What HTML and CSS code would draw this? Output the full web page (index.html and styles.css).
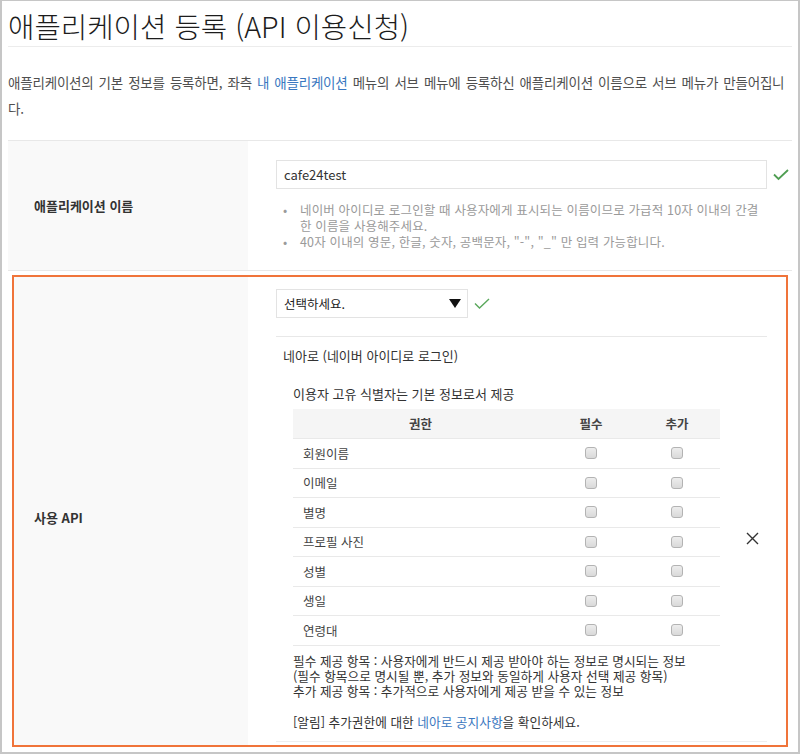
FILE: index.html
```html
<!DOCTYPE html>
<html lang="ko">
<head>
<meta charset="utf-8">
<title>애플리케이션 등록</title>
<link rel="stylesheet" href="styles.css">
</head>
<body>
<div class="frame">
  <h2 class="title">애플리케이션 등록 (API 이용신청)</h2>
  <p class="desc">애플리케이션의 기본 정보를 등록하면, 좌측 <a class="link" href="#">내 애플리케이션</a> 메뉴의 서브 메뉴에 등록하신 애플리케이션 이름으로 서브 메뉴가 만들어집니다.</p>

  <div class="row row-name">
    <div class="label">애플리케이션 이름</div>
    <div class="field">
      <div class="input-line">
        <div class="input">cafe24test</div>
        <svg class="check" width="16" height="12" viewBox="0 0 16 12"><polyline points="1,5.5 5.5,10 15,1" fill="none" stroke="#4f9e52" stroke-width="1.8"/></svg>
      </div>
      <ul class="help">
        <li>네이버 아이디로 로그인할 때 사용자에게 표시되는 이름이므로 가급적 10자 이내의 간결한 이름을 사용해주세요.</li>
        <li>40자 이내의 영문, 한글, 숫자, 공백문자, "-", "_" 만 입력 가능합니다.</li>
      </ul>
    </div>
  </div>

  <div class="row row-api">
    <div class="label label-api">사용 API</div>
    <div class="field field-api">
      <div class="input-line">
        <div class="select">
          <span>선택하세요.</span>
          <svg class="arrow" width="12" height="9" viewBox="0 0 12 9"><polygon points="0,0 12,0 6,9" fill="#111"/></svg>
        </div>
        <svg class="check check-sm" width="16" height="12" viewBox="0 0 16 12"><polyline points="1,5.5 5.5,10 15,1" fill="none" stroke="#5aa85c" stroke-width="1.4"/></svg>
      </div>

      <div class="section">
        <div class="section-body">
          <div class="api-name">네아로 (네이버 아이디로 로그인)</div>
          <div class="sub">이용자 고유 식별자는 기본 정보로서 제공</div>
          <div class="perm">
            <div class="perm-row perm-head"><span>권한</span><span class="c">필수</span><span class="c">추가</span></div>
            <div class="perm-row"><span class="name">회원이름</span><span class="c"><i class="cb"></i></span><span class="c"><i class="cb"></i></span></div>
            <div class="perm-row"><span class="name">이메일</span><span class="c"><i class="cb"></i></span><span class="c"><i class="cb"></i></span></div>
            <div class="perm-row"><span class="name">별명</span><span class="c"><i class="cb"></i></span><span class="c"><i class="cb"></i></span></div>
            <div class="perm-row"><span class="name">프로필 사진</span><span class="c"><i class="cb"></i></span><span class="c"><i class="cb"></i></span></div>
            <div class="perm-row"><span class="name">성별</span><span class="c"><i class="cb"></i></span><span class="c"><i class="cb"></i></span></div>
            <div class="perm-row"><span class="name">생일</span><span class="c"><i class="cb"></i></span><span class="c"><i class="cb"></i></span></div>
            <div class="perm-row"><span class="name">연령대</span><span class="c"><i class="cb"></i></span><span class="c"><i class="cb"></i></span></div>
          </div>
          <div class="notes">
            <p>필수 제공 항목 : 사용자에게 반드시 제공 받아야 하는 정보로 명시되는 정보<br>(필수 항목으로 명시될 뿐, 추가 정보와 동일하게 사용자 선택 제공 항목)<br>추가 제공 항목 : 추가적으로 사용자에게 제공 받을 수 있는 정보</p>
            <p class="notice">[알림] 추가권한에 대한 <a class="link" href="#">네아로 공지사항</a>을 확인하세요.</p>
          </div>
        </div>
        <div class="remove">
          <svg width="13" height="13" viewBox="0 0 13 13"><path d="M1 1 L12 12 M12 1 L1 12" stroke="#333" stroke-width="1.4" fill="none"/></svg>
        </div>
      </div>
    </div>
  </div>
</div>
</body>
</html>
```

FILE: styles.css
```css
* { box-sizing: border-box; }
html, body { margin: 0; padding: 0; background: #fff; }
body {
  font-family: "Noto Sans CJK KR", "Noto Sans", sans-serif;
  color: #333;
}
.frame {
  width: 800px;
  height: 754px;
  border: 1px solid #c6c6c6;
  border-left-width: 2px;
  border-right-width: 2px;
  border-bottom-width: 2px;
  padding: 0 6px;
  overflow: hidden;
}
.title {
  margin: 0;
  padding-top: 4px;
  height: 46px;
  font-size: 28.7px;
  font-weight: 300;
  line-height: 41px;
  color: #1c1c1c;
  border-bottom: 1px solid #ececec;
}
.desc {
  margin: 22px 0 19px;
  font-size: 13.5px;
  line-height: 26px;
  color: #4f4f4f;
  letter-spacing: -0.2px;
  word-spacing: 1.5px;
}
.link { color: #3a77c0; text-decoration: none; }

.row {
  display: flex;
}
.row-name {
  border-top: 1px solid #e8e8e8;
  border-bottom: 1px solid #e8e8e8;
}
.label {
  flex: none;
  width: 240px;
  background: #f9f9f9;
  padding-left: 26px;
  display: flex;
  align-items: center;
  font-size: 13px;
  font-weight: 700;
  color: #333;
}
.field {
  flex: 1;
  padding: 19px 0 20px 28px;
}
.input-line {
  display: flex;
  align-items: center;
}
.input {
  width: 491px;
  height: 29px;
  border: 1px solid #e3e3e3;
  padding-left: 7px;
  font-size: 13px;
  line-height: 27px;
  color: #333;
}
.check { margin-left: 6px; flex: none; }
.help {
  list-style: none;
  margin: 13px 0 0;
  padding: 0;
  width: 487px;
  font-size: 12.5px;
  letter-spacing: 0.15px;
  line-height: 16px;
  color: #9a9a9a;
}
.help li { display: flex; }
.help li::before {
  content: "•";
  flex: none;
  width: 17px;
  padding-left: 7px;
}

.row-api {
  margin: 4px 4px 0;
  border: 2px solid #f0743a;
}
.label-api {
  width: 234px;
  padding-left: 20px;
  padding-top: 14px;
}
.field-api {
  padding: 12px 0 3px 28px;
}
.select {
  width: 192px;
  height: 29px;
  border: 1px solid #e3e3e3;
  padding: 0 6px 0 7px;
  display: flex;
  align-items: center;
  justify-content: space-between;
  font-size: 12.5px;
  color: #222;
}
.check-sm { margin-left: 6px; }

.section {
  margin-top: 18px;
  width: 491px;
  border-top: 1px solid #e8e8e8;
  border-bottom: 1px solid #eeeeee;
  display: flex;
}
.section-body {
  width: 444px;
  padding: 9px 0 12px 7px;
  font-size: 13px;
  color: #333;
}
.api-name { line-height: 20px; }
.sub {
  margin: 18px 0 0 10px;
  line-height: 20px;
}
.perm {
  margin: 5px 0 0 10px;
  width: 427px;
  font-size: 12.5px;
}
.perm-row {
  display: grid;
  grid-template-columns: 255px 86px 86px;
  align-items: center;
  height: 29.5px;
  border-bottom: 1px solid #e9e9e9;
  color: #444;
}
.perm-head {
  height: 30px;
  background: #f5f5f5;
  font-weight: 700;
  color: #444;
}
.perm-head span:first-child { text-align: center; }
.name { padding-left: 10px; }
.c { display: flex; justify-content: center; }
.cb {
  display: block;
  width: 12px;
  height: 12px;
  border: 1px solid #b3b3b3;
  border-radius: 3px;
  background: linear-gradient(#ededed, #d9d9d9);
}
.notes {
  margin: 7px 0 0 10px;
  font-size: 12.7px;
  line-height: 15px;
  color: #333;
}
.notes p { margin: 0; }
.notes .notice { margin-top: 16px; }
.remove {
  flex: 1;
  display: flex;
  align-items: center;
  padding-left: 26px;
}
```
